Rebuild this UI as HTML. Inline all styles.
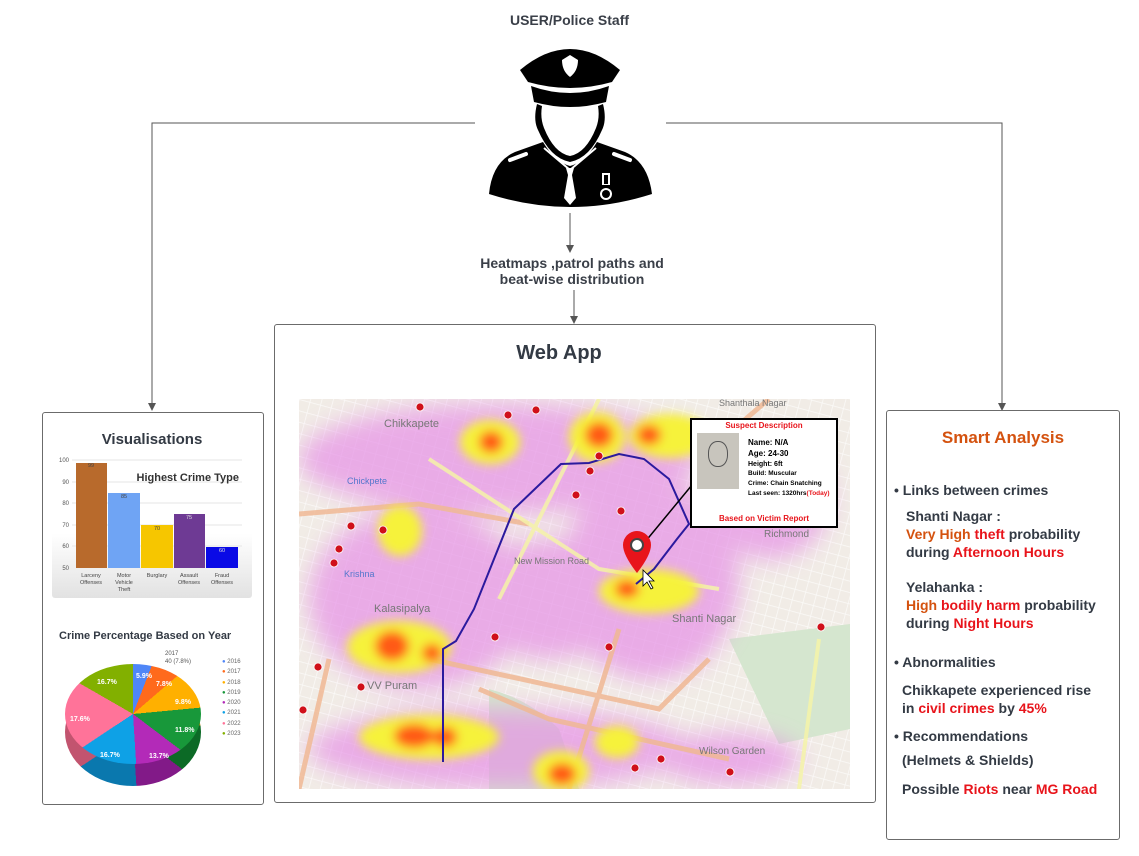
<!DOCTYPE html>
<html><head><meta charset="utf-8"><style>
body{margin:0;width:1139px;height:856px;background:#fff;position:relative;overflow:hidden;font-family:"Liberation Sans",sans-serif;color:#333a44}
.a{position:absolute}
.box{position:absolute;border:1px solid #6b6b6b;border-radius:3px;background:#fff}
.b{font-weight:bold}
.r{color:#e8141b}.o{color:#d4520f}
</style></head><body>
<svg class="a" style="left:0;top:0" width="1139" height="856">
<g stroke="#555" stroke-width="1" fill="none">
<path d="M475 123H152V405"/><path d="M666 123H1002V405"/>
<path d="M570 213V247"/><path d="M574 290V320"/>
</g>
<g fill="#555"><path d="M148 403l4 8 4-8z"/><path d="M998 403l4 8 4-8z"/><path d="M566 245l4 8 4-8z"/><path d="M570 316l4 8 4-8z"/></g>
<!-- police -->
<g fill="#000">
<path d="M520 70 Q570 28 620 70 L612 82 Q570 94 528 82Z"/>
<path d="M531 86 Q570 100 609 86 L606 102 Q570 112 534 102Z"/>
<path d="M537 104 Q533 120 538 130 Q550 158 570 162 Q590 158 602 130 Q607 120 603 104 L598 106 Q600 118 596 128 Q586 153 570 156 Q554 153 544 128 Q540 118 542 106Z"/>
<path d="M489 194 Q492 162 515 152 L543 142 Q555 162 570 166 Q585 162 597 142 L625 152 Q648 162 652 194 Q570 220 489 194Z"/>
</g>
<path d="M562 60 L570 55 L578 60 Q578 71 570 77 Q562 71 562 60Z" fill="#fff"/>
<path d="M566 168 L574 168 L572 175 L576 198 L570 205 L564 198 L568 175Z" fill="#fff"/>
<path d="M544 148 L570 170 L596 148" stroke="#fff" stroke-width="2" fill="none"/>
<path d="M510 160 L526 154" stroke="#fff" stroke-width="4" stroke-linecap="round"/>
<path d="M614 154 L630 160" stroke="#fff" stroke-width="4" stroke-linecap="round"/>
<circle cx="606" cy="194" r="6" fill="#fff"/><path d="M602 173h8v12h-8z" fill="#fff"/><path d="M604 175h4v9h-4z" fill="#000"/>
<circle cx="606" cy="194" r="4" fill="#000"/>
</svg>
<div class="a b" style="left:0;width:1139px;top:12px;text-align:center;font-size:14px;color:#3a3f48">USER/Police Staff</div>
<div class="a b" style="left:472px;width:200px;top:255px;text-align:center;font-size:14px;line-height:16px;color:#3a3f48">Heatmaps ,patrol paths and beat-wise distribution</div>

<!-- Visualisations -->
<div class="box" style="left:42px;top:412px;width:220px;height:391px"></div>
<div class="a b" style="left:42px;width:220px;top:431px;text-align:center;font-size:15px">Visualisations</div>
<div class="a" style="left:52px;top:455px;width:200px;height:143px;background:linear-gradient(#fff 55%,#e2e2e2);border-radius:3px"></div>
<svg class="a" style="left:52px;top:455px" width="200" height="145">
<g stroke="#e6e6e6"><path d="M20 5H190M20 27H190M20 48H190M20 70H190M20 91H190"/></g>
<g font-size="6" fill="#555" text-anchor="end" font-family="Liberation Sans"><text x="17" y="7">100</text><text x="17" y="29">90</text><text x="17" y="50">80</text><text x="17" y="72">70</text><text x="17" y="93">60</text><text x="17" y="115">50</text></g>
<rect x="24" y="8" width="31" height="105" fill="#b86a2c"/>
<rect x="56" y="38" width="32" height="75" fill="#6fa4f4"/>
<rect x="89" y="70" width="32" height="43" fill="#f6c600"/>
<rect x="122" y="59" width="31" height="54" fill="#6e3a94"/>
<rect x="154" y="92" width="32" height="21" fill="#0a0ae6"/>
<g font-size="5.5" fill="#444" text-anchor="middle" font-family="Liberation Sans"><text x="39" y="12">99</text><text x="72" y="43">85</text><text x="105" y="75">70</text><text x="137" y="64" fill="#ddd">75</text><text x="170" y="97" fill="#ddd">60</text>
<text x="39" y="122">Larceny</text><text x="39" y="129">Offenses</text><text x="72" y="122">Motor</text><text x="72" y="129">Vehicle</text><text x="72" y="136">Theft</text><text x="105" y="122">Burglary</text><text x="137" y="122">Assault</text><text x="137" y="129">Offenses</text><text x="170" y="122">Fraud</text><text x="170" y="129">Offenses</text></g>
<text x="187" y="26" font-size="11" font-weight="bold" fill="#333" text-anchor="end" font-family="Liberation Sans">Highest Crime Type</text>
</svg>
<div class="a b" style="left:59px;top:630px;font-size:11px">Crime Percentage Based on Year</div>
<div class="a" style="left:65px;top:678px;width:136px;height:108px;border-radius:50%;background:conic-gradient(#3a5fb0 0 5.9%,#c04d12 0 13.7%,#c48400 0 23.5%,#0c6a26 0 35.3%,#821a88 0 49%,#0a78ae 0 65.7%,#c2546f 0 83.3%,#5e7c00 0)"></div>
<div class="a" style="left:65px;top:664px;width:136px;height:100px;border-radius:50%;background:conic-gradient(#4f86f7 0 5.9%,#ff6a1c 0 13.7%,#ffb000 0 23.5%,#18983a 0 35.3%,#b32ab8 0 49%,#0ea1e6 0 65.7%,#ff7399 0 83.3%,#82b000 0)"></div>
<div class="a" style="left:65px;top:664px;width:136px;height:100px;font-size:7px;font-weight:bold;color:#fff">
<span class="a" style="left:71px;top:9px">5.9%</span><span class="a" style="left:91px;top:17px">7.8%</span><span class="a" style="left:110px;top:35px">9.8%</span><span class="a" style="left:110px;top:63px">11.8%</span><span class="a" style="left:84px;top:89px">13.7%</span><span class="a" style="left:35px;top:88px">16.7%</span><span class="a" style="left:5px;top:52px">17.6%</span><span class="a" style="left:32px;top:15px">16.7%</span></div>
<div class="a" style="left:165px;top:650px;font-size:6px;color:#555;line-height:8px">2017<br>40 (7.8%)</div>
<div class="a" style="left:222px;top:657px;font-size:6px;color:#666;line-height:10.3px">
<div><span style="color:#4f86f7">●</span> 2016</div><div><span style="color:#ff6a1c">●</span> 2017</div><div><span style="color:#ffb000">●</span> 2018</div><div><span style="color:#18983a">●</span> 2019</div><div><span style="color:#b32ab8">●</span> 2020</div><div><span style="color:#0ea1e6">●</span> 2021</div><div><span style="color:#ff7399">●</span> 2022</div><div><span style="color:#82b000">●</span> 2023</div></div>

<!-- Web App -->
<div class="box" style="left:274px;top:324px;width:600px;height:477px"></div>
<div class="a b" style="left:274px;width:570px;top:342px;text-align:center;font-size:20px">Web App</div>
<svg class="a" style="left:299px;top:399px" width="551" height="390">
<defs><filter id="bl"><feGaussianBlur stdDeviation="12"/></filter><filter id="bl2"><feGaussianBlur stdDeviation="5"/></filter>
<pattern id="grid" width="11" height="11" patternUnits="userSpaceOnUse" patternTransform="rotate(15)"><rect width="11" height="11" fill="#f1ece6"/><path d="M0 0H11M0 0V11" stroke="#fbfaf8" stroke-width="1.5"/></pattern></defs>
<rect width="551" height="390" fill="url(#grid)"/>
<path d="M190 290 Q230 300 260 330 L280 390 L190 390Z" fill="#d3e8cb"/>
<path d="M430 240 L551 225 L551 330 L480 345Z" fill="#d5e6cf"/>
<g filter="url(#bl)" fill="#e690e6" opacity=".7">
<ellipse cx="200" cy="60" rx="200" ry="55"/><ellipse cx="120" cy="200" rx="110" ry="90"/><ellipse cx="350" cy="180" rx="90" ry="100"/><ellipse cx="200" cy="350" rx="190" ry="40"/><ellipse cx="430" cy="360" rx="70" ry="25"/><ellipse cx="250" cy="200" rx="80" ry="60"/><ellipse cx="470" cy="100" rx="60" ry="60"/></g>
<g stroke="#f0b894" stroke-width="5" fill="none" opacity=".85"><path d="M0 115 L120 105 L230 125"/><path d="M30 260 L0 390"/><path d="M130 260 L360 310 L410 260"/><path d="M320 230 L270 390"/><path d="M180 290 L250 320 L430 360"/><path d="M470 0 L400 60"/></g>
<g stroke="#f5f3a8" stroke-width="4" fill="none" opacity=".85"><path d="M300 0 L200 200"/><path d="M130 60 L300 170 L420 190"/><path d="M520 240 L500 390"/></g>
<g filter="url(#bl2)">
<g fill="#f6f23a"><ellipse cx="191" cy="43" rx="30" ry="22"/><ellipse cx="298" cy="38" rx="28" ry="25"/><ellipse cx="370" cy="37" rx="40" ry="22"/><ellipse cx="101" cy="132" rx="22" ry="25"/><ellipse cx="100" cy="248" rx="52" ry="26"/><ellipse cx="130" cy="338" rx="70" ry="22"/><ellipse cx="262" cy="372" rx="28" ry="20"/><ellipse cx="318" cy="343" rx="22" ry="16"/><ellipse cx="350" cy="192" rx="50" ry="22"/></g>
<g fill="#ff5a14"><ellipse cx="192" cy="43" rx="12" ry="11"/><ellipse cx="300" cy="36" rx="14" ry="13"/><ellipse cx="350" cy="36" rx="12" ry="10"/><ellipse cx="93" cy="247" rx="17" ry="15"/><ellipse cx="133" cy="254" rx="10" ry="9"/><ellipse cx="115" cy="337" rx="20" ry="12"/><ellipse cx="146" cy="338" rx="12" ry="10"/><ellipse cx="263" cy="375" rx="14" ry="11"/><ellipse cx="328" cy="190" rx="12" ry="9"/></g></g>
<path d="M144 363 V250 L157 242 L175 210 L215 110 L262 65 L290 64 L320 55 L345 60 L370 80 L390 125 L378 140 L355 170 L337 185" stroke="#2b1a9e" stroke-width="2" fill="none"/>
<g fill="#d0101a" stroke="#fff" stroke-width=".8"><circle cx="121" cy="8" r="4"/><circle cx="237" cy="11" r="4"/><circle cx="52" cy="127" r="4"/><circle cx="40" cy="150" r="4"/><circle cx="35" cy="164" r="4"/><circle cx="84" cy="131" r="4"/><circle cx="277" cy="96" r="4"/><circle cx="291" cy="72" r="4"/><circle cx="322" cy="112" r="4"/><circle cx="300" cy="57" r="4"/><circle cx="196" cy="238" r="4"/><circle cx="310" cy="248" r="4"/><circle cx="19" cy="268" r="4"/><circle cx="4" cy="311" r="4"/><circle cx="62" cy="288" r="4"/><circle cx="522" cy="228" r="4"/><circle cx="336" cy="369" r="4"/><circle cx="362" cy="360" r="4"/><circle cx="431" cy="373" r="4"/><circle cx="209" cy="16" r="4"/></g>
<g font-size="9" fill="#777" font-family="Liberation Sans"><text x="85" y="28" font-size="11">Chikkapete</text><text x="420" y="7">Shanthala Nagar</text><text x="465" y="138" font-size="10">Richmond</text><text x="373" y="223" font-size="11">Shanti Nagar</text><text x="75" y="213" font-size="11">Kalasipalya</text><text x="68" y="290" font-size="11">VV Puram</text><text x="400" y="355" font-size="10">Wilson Garden</text><text x="215" y="165">New Mission Road</text><text x="48" y="85" fill="#5577cc">Chickpete</text><text x="45" y="178" fill="#5577cc">Krishna</text></g>
</svg>
<!-- suspect -->
<svg class="a" style="left:600px;top:415px" width="240" height="185">
<path d="M92 70 L40 133" stroke="#000" stroke-width="1.5"/>
<path d="M37 158 Q23 140 23 130 A14 14 0 0 1 51 130 Q51 140 37 158Z" fill="#e8141b"/><circle cx="37" cy="130" r="6" fill="#fff"/><circle cx="37" cy="130" r="6" fill="none" stroke="#444" stroke-width="2"/>
<path d="M43 155 L43 171 L47 167 L51 174 L53 173 L49 166 L54 166Z" fill="#fff" stroke="#000" stroke-width=".8"/>
</svg>
<div class="a" style="left:690px;top:418px;width:144px;height:106px;border:2px solid #000;background:#fff"></div>
<div class="a b r" style="left:690px;width:148px;top:421px;text-align:center;font-size:8px">Suspect Description</div>
<div class="a" style="left:697px;top:433px;width:42px;height:56px;background:#c8c5bd"><div class="a" style="left:11px;top:8px;width:18px;height:24px;border:1px solid #555;border-radius:45%"></div></div>
<div class="a b" style="left:748px;top:438px;font-size:6.5px;line-height:9.8px;color:#000"><span style="font-size:8px">Name: N/A</span><br><span style="font-size:8px">Age: 24-30</span><br><span style="font-size:7px">Height: 6ft</span><br>Build: Muscular<br>Crime: Chain Snatching<br>Last seen: 1320hrs<span class="r">(Today)</span></div>
<div class="a b r" style="left:690px;width:148px;top:514px;text-align:center;font-size:8px">Based on Victim Report</div>

<!-- Smart Analysis -->
<div class="box" style="left:886px;top:410px;width:232px;height:428px"></div>
<div class="a b o" style="left:886px;width:234px;top:428px;text-align:center;font-size:17px">Smart Analysis</div>
<div class="a b" style="left:894px;top:481px;font-size:14px;line-height:18px">• Links between crimes</div>
<div class="a b" style="left:906px;top:507px;font-size:14px;line-height:18px">Shanti Nagar :<br><span class="o">Very High</span> <span class="r">theft</span> probability<br>during <span class="r">Afternoon Hours</span></div>
<div class="a b" style="left:906px;top:578px;font-size:14px;line-height:18px">Yelahanka :<br><span class="o">High</span> <span class="r">bodily harm</span> probability<br>during <span class="r">Night Hours</span></div>
<div class="a b" style="left:894px;top:654px;font-size:14px">• Abnormalities</div>
<div class="a b" style="left:902px;top:681px;font-size:14px;line-height:18px">Chikkapete experienced rise<br>in <span class="r">civil crimes</span> by <span class="r">45%</span></div>
<div class="a b" style="left:894px;top:728px;font-size:14px">• Recommendations</div>
<div class="a b" style="left:902px;top:752px;font-size:14px">(Helmets &amp; Shields)</div>
<div class="a b" style="left:902px;top:781px;font-size:14px">Possible <span class="r">Riots</span> near <span class="r">MG Road</span></div>
</body></html>
